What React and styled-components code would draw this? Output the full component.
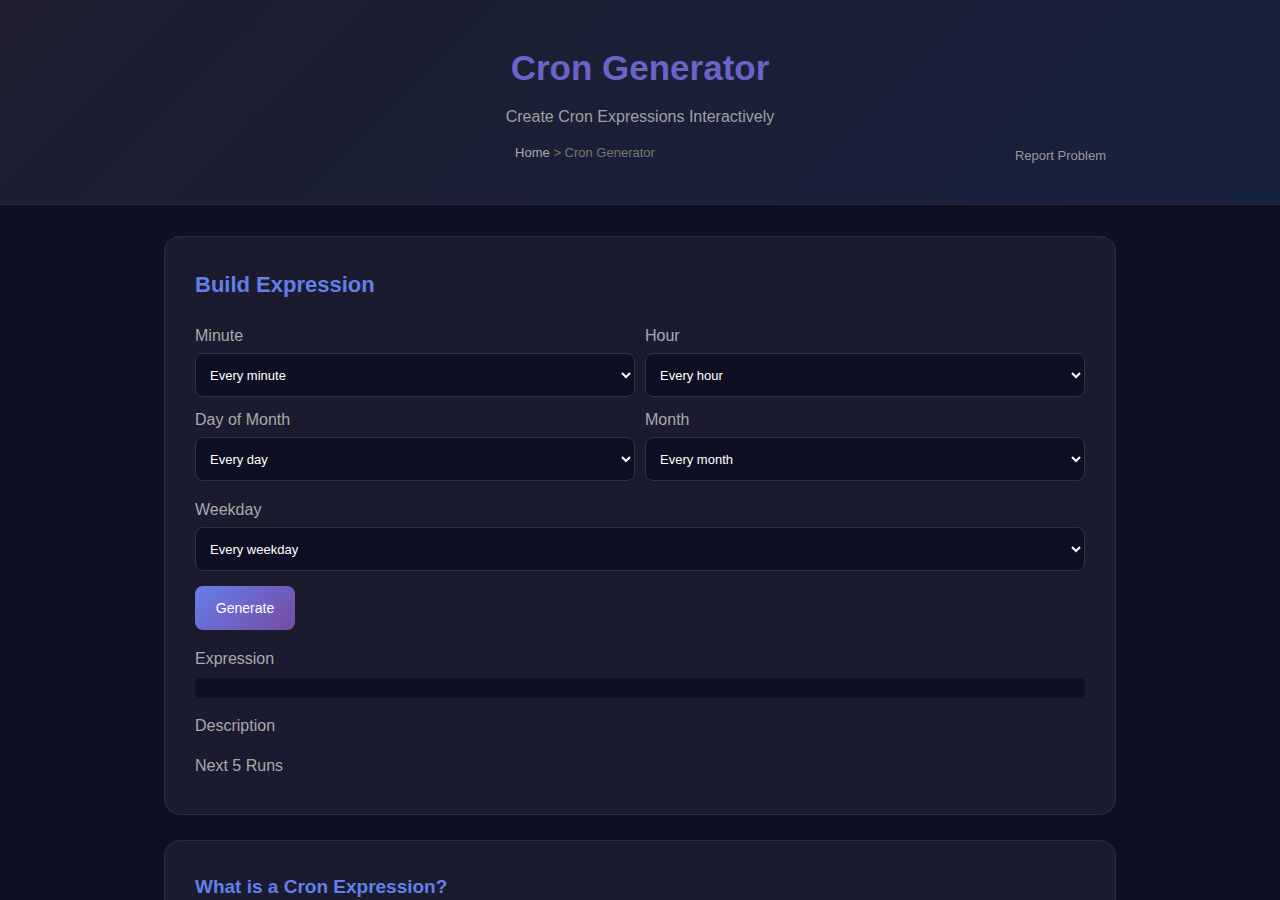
import React from 'react';
import styled, { createGlobalStyle } from 'styled-components';

const Global = createGlobalStyle`
  body { margin: 0; background: #0f0f23; font-family: "Liberation Sans", Arial, sans-serif; color: #e0e0e0; }
`;

const Header = styled.header`
  background: linear-gradient(135deg, #1e1e2e 0%, #16213e 100%);
  border-bottom: 1px solid #2a2a40;
  height: 205px;
  box-sizing: border-box;
  padding-top: 46px;
  text-align: center;
  position: relative;
`;

const Title = styled.h1`
  margin: 0;
  font-size: 35px;
  font-weight: bold;
  color: #6a63c8;
  line-height: 44px;
`;

const Subtitle = styled.p`
  margin: 18px 0 0;
  font-size: 16px;
  color: #a0a0a0;
`;

const Crumbs = styled.div`
  margin-top: 19px;
  padding-right: 110px;
  font-size: 13px;
  color: #777;
  a { color: #aaa; text-decoration: none; }
`;

const Report = styled.a`
  position: absolute;
  right: 174px;
  top: 148px;
  font-size: 13px;
  color: #999;
  text-decoration: none;
`;

const Main = styled.main`
  width: 952px;
  margin: 31px auto 0;
  display: flex;
  flex-direction: column;
  gap: 25px;
`;

const Card = styled.section`
  background: #1b1b2f;
  border: 1px solid #2c2c44;
  border-radius: 16px;
  padding: 30px 30px 39px;
`;

const CardTitle = styled.h2`
  margin: 5px 0 29px;
  font-size: 22px;
  color: #667eea;
`;

const SubTitle = styled(CardTitle)`
  font-size: 19px;
`;

const Grid = styled.div`
  display: grid;
  grid-template-columns: 1fr 1fr;
  column-gap: 10px;
  row-gap: 14px;
`;

const Field = styled.div`
  display: flex;
  flex-direction: column;
  gap: 8px;
  margin-top: ${p => p.$mt || 0}px;
`;

const Label = styled.label`
  font-size: 16px;
  color: #aaa;
  line-height: 18px;
`;

const Select = styled.select`
  height: 44px;
  background: #0f0f23;
  border: 1px solid #333;
  border-radius: 8px;
  color: #fff;
  font-size: 13px;
  font-family: inherit;
  padding: 0 10px;
`;

const Button = styled.button`
  margin-top: 15px;
  width: 100px;
  height: 44px;
  border: none;
  border-radius: 8px;
  background: linear-gradient(135deg, #667eea 0%, #764ba2 100%);
  color: #fff;
  font-size: 14px;
  font-family: inherit;
`;

const Output = styled.div`
  height: 20px;
  background: #0f0f23;
  border-radius: 6px;
`;

const Section = styled.div`
  margin-top: ${p => p.$mt}px;
`;

const Sel = ({ label, opt, mt }) => (
  <Field $mt={mt}>
    <Label>{label}</Label>
    <Select><option>{opt}</option></Select>
  </Field>
);

export default function App() {
  return (
    <>
      <Global />
      <Header>
        <Title>Cron Generator</Title>
        <Subtitle>Create Cron Expressions Interactively</Subtitle>
        <Crumbs><a href="#">Home</a> &gt; Cron Generator</Crumbs>
        <Report href="#">Report Problem</Report>
      </Header>
      <Main>
        <Card>
          <CardTitle>Build Expression</CardTitle>
          <Grid>
            <Sel label="Minute" opt="Every minute" />
            <Sel label="Hour" opt="Every hour" />
            <Sel label="Day of Month" opt="Every day" />
            <Sel label="Month" opt="Every month" />
          </Grid>
          <Sel label="Weekday" opt="Every weekday" mt={20} />
          <Button>Generate</Button>
          <Section $mt={20}>
            <Label>Expression</Label>
          </Section>
          <Section $mt={10}><Output /></Section>
          <Section $mt={19}><Label>Description</Label></Section>
          <Section $mt={22}><Label>Next 5 Runs</Label></Section>
        </Card>
        <Card>
          <SubTitle as="h3">What is a Cron Expression?</SubTitle>
        </Card>
      </Main>
    </>
  );
}
